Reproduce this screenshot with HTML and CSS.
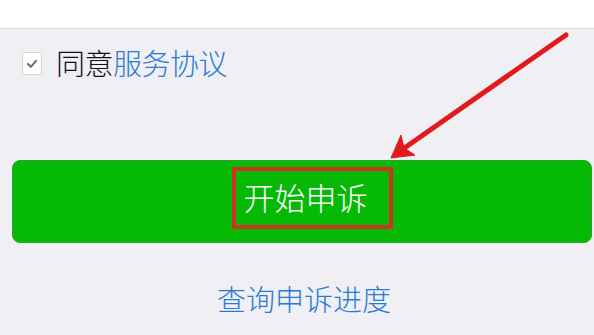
FILE: index.html
```html
<!DOCTYPE html>
<html lang="zh-CN">
<head>
<meta charset="utf-8">
<link rel="stylesheet" href="styles.css">
</head>
<body>
<div class="page">
  <div class="top"></div>
  <div class="agree">
    <span class="checkbox">
      <svg viewBox="0 0 20 23" width="20" height="23"><path d="M5.5 12 L8.8 15.2 L14.5 8.5" fill="none" stroke="#6b6b6b" stroke-width="2.2" stroke-linecap="round" stroke-linejoin="round"/></svg>
    </span>
    <span class="agree-text">同意<span class="link">服务协议</span></span>
  </div>
  <div class="btn">
    <span class="btn-label">开始申诉</span>
  </div>
  <div class="query">查询申诉进度</div>
  <svg class="arrow" viewBox="0 0 594 335" width="594" height="335">
    <line x1="566" y1="35" x2="403" y2="149" stroke="#e01a1e" stroke-width="5" stroke-linecap="round"/>
    <polygon points="391,158 401,135 404,148 415,155" fill="#e01a1e" stroke="#e01a1e" stroke-width="1" stroke-linejoin="round"/>
  </svg>
</div>
</body>
</html>
```
FILE: styles.css
```css
html, body {
  margin: 0;
  padding: 0;
}
body {
  background: #efeff4;
  font-family: "Noto Sans CJK SC", "Noto Sans", sans-serif;
}
.page {
  position: relative;
  width: 594px;
  height: 335px;
  overflow: hidden;
  display: flex;
  flex-direction: column;
}
.top {
  height: 28px;
  background: #ffffff;
  border-bottom: 1px solid #d9d9de;
}
.agree {
  display: flex;
  align-items: center;
  margin-top: 17px;
  height: 32px;
  padding-left: 22px;
}
.checkbox {
  display: block;
  width: 18px;
  height: 21px;
  background: #ffffff;
  border: 1px solid #d6d6d6;
  border-radius: 2px;
  box-sizing: content-box;
  margin-top: 3px;
}
.checkbox svg {
  display: block;
  width: 18px;
  height: 21px;
}
.agree-text {
  margin-left: 14px;
  font-size: 29px;
  font-weight: 300;
  line-height: 32px;
  color: #111111;
  letter-spacing: -0.5px;
}
.link {
  color: #2b7bd6;
}
.btn {
  margin: 82px 2px 0 12px;
  height: 81px;
  background: #05b905;
  border: 1px solid #2ea12e;
  border-radius: 8px;
  display: flex;
  justify-content: center;
  align-items: center;
}
.btn-label {
  display: block;
  border: 4px solid #cc3320;
  padding: 0 21px 0 8px;
  margin-left: 20px;
  margin-top: -7px;
  height: 54px;
  line-height: 52px;
  font-size: 31px;
  font-weight: 300;
  color: #ffffff;
}
.query {
  margin-top: 37px;
  text-align: center;
  padding-left: 14px;
  font-size: 29px;
  font-weight: 300;
  line-height: 36px;
  color: #2b7bd6;
}
.arrow {
  position: absolute;
  left: 0;
  top: 0;
  pointer-events: none;
}
```
